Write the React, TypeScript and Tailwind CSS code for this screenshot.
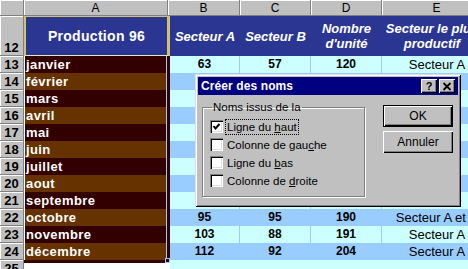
import clsx from "clsx";

const months = [
  "janvier",
  "février",
  "mars",
  "avril",
  "mai",
  "juin",
  "juillet",
  "aout",
  "septembre",
  "octobre",
  "novembre",
  "décembre",
];

// only the rows not hidden by the dialog
const values: Record<number, string[]> = {
  13: ["63", "57", "120", "Secteur A"],
  22: ["95", "95", "190", "Secteur A et B"],
  23: ["103", "88", "191", "Secteur A"],
  24: ["112", "92", "204", "Secteur A"],
};

function RowHead({ n, tall }: { n: number; tall?: boolean }) {
  return (
    <div
      className={clsx(
        "w-[24px] shrink-0 bg-[#c0c0c0] border-r border-b border-[#808080] shadow-[inset_1px_1px_#fff] flex justify-center text-[13px] font-bold text-black leading-[15px]",
        tall ? "items-end" : "items-center"
      )}
    >
      {n}
    </div>
  );
}

function ColHead({ label, w }: { label: string; w: string }) {
  return (
    <div
      className={clsx(
        "shrink-0 h-full bg-[#c0c0c0] border-r border-b border-[#808080] shadow-[inset_1px_1px_#fff] flex items-center justify-center text-[12px] text-black",
        w
      )}
    >
      {label}
    </div>
  );
}

function Row({ n, month }: { n: number; month: string }) {
  const odd = n % 2 === 1;
  const v = values[n] ?? ["", "", "", ""];
  const bg = odd ? "bg-[#ccffff]" : "bg-[#99ccff]";
  return (
    <div className="flex h-[17px]">
      <RowHead n={n} />
      <div className="w-[146px] shrink-0 flex">
        <div
          className={clsx(
            "w-[143px] border-l border-white border-r border-r-[#99ccff] pl-[1px] text-white font-bold text-[13px] tracking-[0.4px] leading-[17px]",
            odd ? "bg-[#330000]" : "bg-[#663300]"
          )}
        >
          {month}
        </div>
        <div className="w-[3px] bg-[#330000]" />
      </div>
      <div className={clsx("w-[70px] shrink-0 border-r border-[#99ccff] text-center font-bold text-[12px] leading-[17px]", bg)}>{v[0]}</div>
      <div className={clsx("w-[71px] shrink-0 border-r border-[#99ccff] text-center font-bold text-[12px] leading-[17px]", bg)}>{v[1]}</div>
      <div className={clsx("w-[71px] shrink-0 border-r border-[#99ccff] text-center font-bold text-[12px] leading-[17px]", bg)}>{v[2]}</div>
      <div className={clsx("w-[110px] shrink-0 text-center text-[13px] leading-[17px] whitespace-nowrap overflow-hidden", bg)}>
        <span className="inline-block w-[100px]">{v[3]}</span>
      </div>
    </div>
  );
}

function CheckBox({ checked }: { checked?: boolean }) {
  return (
    <div className="w-[13px] h-[13px] shrink-0 bg-white shadow-[inset_1px_1px_#808080,inset_2px_2px_#000,inset_-1px_-1px_#fff,inset_-2px_-2px_#dfdfdf] flex items-center justify-center">
      {checked && (
        <svg width="9" height="9" viewBox="0 0 9 9">
          <polyline points="1.5,4 3.5,6.5 7.5,2" fill="none" stroke="#000" strokeWidth="2" />
        </svg>
      )}
    </div>
  );
}

function Option({ children, checked, focus }: { children: React.ReactNode; checked?: boolean; focus?: boolean }) {
  return (
    <div className="flex items-center gap-[3px] h-[13px]">
      <CheckBox checked={checked} />
      <span className={clsx("px-[1px] leading-[14px]", focus && "outline outline-1 outline-dotted outline-black")}>{children}</span>
    </div>
  );
}

function Win95Button({ children, isDefault }: { children: React.ReactNode; isDefault?: boolean }) {
  return (
    <button
      className={clsx(
        "w-[70px] h-[22px] bg-[#c0c0c0] text-[12px] text-black flex items-center justify-center",
        isDefault
          ? "border border-black shadow-[inset_1px_1px_#fff,inset_-1px_-1px_#000,inset_-2px_-2px_#808080]"
          : "shadow-[inset_1px_1px_#fff,inset_-1px_-1px_#000,inset_-2px_-2px_#808080]"
      )}
    >
      {children}
    </button>
  );
}

function CreateNamesDialog() {
  return (
    <div className="absolute left-[195px] top-[74px] w-[266px] h-[133px] bg-[#c0c0c0] p-[3px] shadow-[inset_1px_1px_#dfdfdf,inset_-1px_-1px_#000,inset_2px_2px_#fff,inset_-2px_-2px_#808080] font-['Liberation_Sans',Arial,sans-serif]">
      {/* title bar */}
      <div className="h-[18px] bg-[#000080] flex items-center pl-[3px] pr-[3px]">
        <span className="text-white font-bold text-[12px] tracking-[0.1px] flex-1">Créer des noms</span>
        <div className="flex gap-[2px]">
          <div className="w-[16px] h-[14px] bg-[#c0c0c0] shadow-[inset_1px_1px_#fff,inset_-1px_-1px_#000,inset_-2px_-2px_#808080] flex items-center justify-center text-[11px] font-bold leading-none">
            ?
          </div>
          <div className="w-[16px] h-[14px] bg-[#c0c0c0] shadow-[inset_1px_1px_#fff,inset_-1px_-1px_#000,inset_-2px_-2px_#808080] flex items-center justify-center">
            <svg width="10" height="9" viewBox="0 0 10 9">
              <path d="M1.5 1 L8.5 8 M8.5 1 L1.5 8" stroke="#000" strokeWidth="1.8" />
            </svg>
          </div>
        </div>
      </div>
      {/* body */}
      <div className="flex items-start text-[11.5px] text-black">
        <fieldset className="ml-[4px] mt-[6px] w-[163px] h-[96px] border border-[#808080] shadow-[1px_1px_#fff,inset_1px_1px_#fff] pl-[7px] pt-[6px]">
          <legend className="ml-[2px] px-[1px] leading-[13px]">Noms issus de la</legend>
          <div className="flex flex-col gap-[5px]">
            <Option checked focus>
              Ligne du <span className="underline">h</span>aut
            </Option>
            <Option>
              Colonne de gau<span className="underline">c</span>he
            </Option>
            <Option>
              Ligne du <span className="underline">b</span>as
            </Option>
            <Option>
              Colonne de <span className="underline">d</span>roite
            </Option>
          </div>
        </fieldset>
        <div className="ml-[18px] mt-[10px] flex flex-col gap-[4px]">
          <Win95Button isDefault>OK</Win95Button>
          <Win95Button>Annuler</Win95Button>
        </div>
      </div>
    </div>
  );
}

export default function App() {
  return (
    <div className="relative w-[468px] h-[269px] overflow-hidden bg-white font-['Liberation_Sans',Arial,sans-serif] text-black">
      {/* column letters */}
      <div className="flex h-[16px]">
        <ColHead label="" w="w-[24px]" />
        <ColHead label="A" w="w-[144px]" />
        <ColHead label="B" w="w-[72px]" />
        <ColHead label="C" w="w-[71px]" />
        <ColHead label="D" w="w-[71px]" />
        <ColHead label="E" w="w-[110px]" />
      </div>

      {/* row 12: headings */}
      <div className="flex h-[40px]">
        <RowHead n={12} tall />
        <div className="w-[146px] shrink-0 bg-[#2b3692] border-l-2 border-r-[3px] border-t border-[#cfc36b] border-b border-b-[#e8e8c8] flex items-center justify-center text-white font-bold text-[14px] tracking-[0.3px]">
          Production 96
        </div>
        <div className="flex bg-[#2b3692] text-white font-bold italic text-[13px] leading-[15px] text-center">
          <div className="w-[70px] shrink-0 flex items-center justify-center">Secteur A</div>
          <div className="w-[71px] shrink-0 flex items-center justify-center">Secteur B</div>
          <div className="w-[71px] shrink-0 flex items-center justify-center">
            Nombre
            <br />
            d'unité
          </div>
          <div className="w-[110px] shrink-0 flex items-center overflow-hidden whitespace-nowrap">
            <span className="inline-block w-[100px] text-center">
              Secteur le plus
              <br />
              productif
            </span>
          </div>
        </div>
      </div>

      {months.map((m, i) => (
        <Row key={m} n={13 + i} month={m} />
      ))}

      {/* row 25 */}
      <div className="flex h-[17px]">
        <RowHead n={25} />
        <div className="relative w-[146px] shrink-0 bg-white border-t-[3px] border-[#330000]">
          <div className="absolute -top-[5px] right-0 w-[5px] h-[5px] bg-[#330000] border border-[#99ccff]" />
        </div>
        <div className="flex-1 bg-[#ccffff]" />
      </div>

      <CreateNamesDialog />
    </div>
  );
}
